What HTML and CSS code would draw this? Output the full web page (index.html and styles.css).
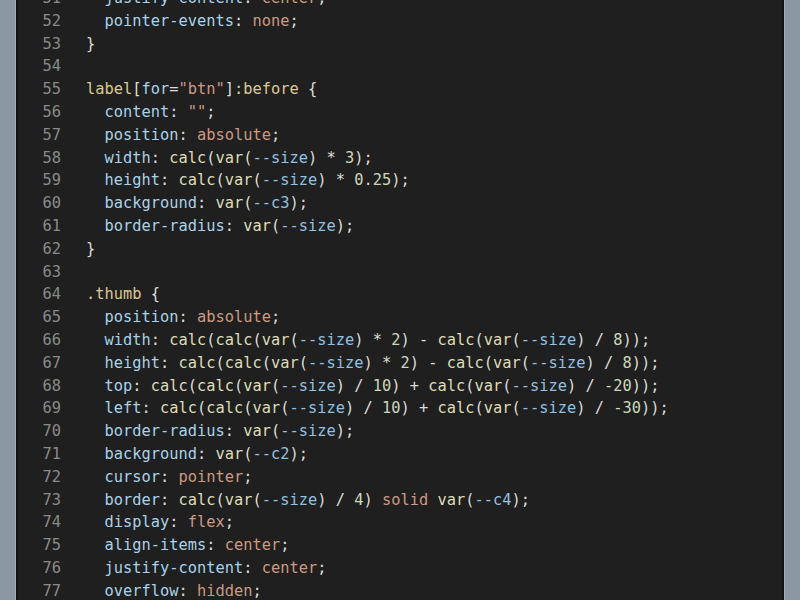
FILE: index.html
```html
<!DOCTYPE html>
<html>
<head>
<meta charset="utf-8">
<link rel="stylesheet" href="styles.css">
</head>
<body>
<div class="frame">
  <div class="side side-left"></div>
  <div class="editor">
    <div class="code">
      <div class="line"><span class="ln">51</span><span class="tx">  <span class="p">justify-content</span>: <span class="v">center</span>;</span></div>
      <div class="line"><span class="ln">52</span><span class="tx">  <span class="p">pointer-events</span>: <span class="v">none</span>;</span></div>
      <div class="line"><span class="ln">53</span><span class="tx">}</span></div>
      <div class="line"><span class="ln">54</span><span class="tx"></span></div>
      <div class="line"><span class="ln">55</span><span class="tx"><span class="s">label</span>[<span class="a">for</span>=<span class="v">"btn"</span>]<span class="s">:before</span> {</span></div>
      <div class="line"><span class="ln">56</span><span class="tx">  <span class="p">content</span>: <span class="v">""</span>;</span></div>
      <div class="line"><span class="ln">57</span><span class="tx">  <span class="p">position</span>: <span class="v">absolute</span>;</span></div>
      <div class="line"><span class="ln">58</span><span class="tx">  <span class="p">width</span>: <span class="f">calc</span>(<span class="f">var</span>(<span class="vr">--size</span>) * <span class="n">3</span>);</span></div>
      <div class="line"><span class="ln">59</span><span class="tx">  <span class="p">height</span>: <span class="f">calc</span>(<span class="f">var</span>(<span class="vr">--size</span>) * <span class="n">0.25</span>);</span></div>
      <div class="line"><span class="ln">60</span><span class="tx">  <span class="p">background</span>: <span class="f">var</span>(<span class="vr">--c3</span>);</span></div>
      <div class="line"><span class="ln">61</span><span class="tx">  <span class="p">border-radius</span>: <span class="f">var</span>(<span class="vr">--size</span>);</span></div>
      <div class="line"><span class="ln">62</span><span class="tx">}</span></div>
      <div class="line"><span class="ln">63</span><span class="tx"></span></div>
      <div class="line"><span class="ln">64</span><span class="tx"><span class="s">.thumb</span> {</span></div>
      <div class="line"><span class="ln">65</span><span class="tx">  <span class="p">position</span>: <span class="v">absolute</span>;</span></div>
      <div class="line"><span class="ln">66</span><span class="tx">  <span class="p">width</span>: <span class="f">calc</span>(<span class="f">calc</span>(<span class="f">var</span>(<span class="vr">--size</span>) * <span class="n">2</span>) - <span class="f">calc</span>(<span class="f">var</span>(<span class="vr">--size</span>) / <span class="n">8</span>));</span></div>
      <div class="line"><span class="ln">67</span><span class="tx">  <span class="p">height</span>: <span class="f">calc</span>(<span class="f">calc</span>(<span class="f">var</span>(<span class="vr">--size</span>) * <span class="n">2</span>) - <span class="f">calc</span>(<span class="f">var</span>(<span class="vr">--size</span>) / <span class="n">8</span>));</span></div>
      <div class="line"><span class="ln">68</span><span class="tx">  <span class="p">top</span>: <span class="f">calc</span>(<span class="f">calc</span>(<span class="f">var</span>(<span class="vr">--size</span>) / <span class="n">10</span>) + <span class="f">calc</span>(<span class="f">var</span>(<span class="vr">--size</span>) / <span class="n">-20</span>));</span></div>
      <div class="line"><span class="ln">69</span><span class="tx">  <span class="p">left</span>: <span class="f">calc</span>(<span class="f">calc</span>(<span class="f">var</span>(<span class="vr">--size</span>) / <span class="n">10</span>) + <span class="f">calc</span>(<span class="f">var</span>(<span class="vr">--size</span>) / <span class="n">-30</span>));</span></div>
      <div class="line"><span class="ln">70</span><span class="tx">  <span class="p">border-radius</span>: <span class="f">var</span>(<span class="vr">--size</span>);</span></div>
      <div class="line"><span class="ln">71</span><span class="tx">  <span class="p">background</span>: <span class="f">var</span>(<span class="vr">--c2</span>);</span></div>
      <div class="line"><span class="ln">72</span><span class="tx">  <span class="p">cursor</span>: <span class="v">pointer</span>;</span></div>
      <div class="line"><span class="ln">73</span><span class="tx">  <span class="p">border</span>: <span class="f">calc</span>(<span class="f">var</span>(<span class="vr">--size</span>) / <span class="n">4</span>) <span class="v">solid</span> <span class="f">var</span>(<span class="vr">--c4</span>);</span></div>
      <div class="line"><span class="ln">74</span><span class="tx">  <span class="p">display</span>: <span class="v">flex</span>;</span></div>
      <div class="line"><span class="ln">75</span><span class="tx">  <span class="p">align-items</span>: <span class="v">center</span>;</span></div>
      <div class="line"><span class="ln">76</span><span class="tx">  <span class="p">justify-content</span>: <span class="v">center</span>;</span></div>
      <div class="line"><span class="ln">77</span><span class="tx">  <span class="p">overflow</span>: <span class="v">hidden</span>;</span></div>
      <div class="line"><span class="ln">78</span><span class="tx">}</span></div>
    </div>
  </div>
  <div class="side side-right"></div>
</div>
</body>
</html>
```

FILE: styles.css
```css
html, body {
  margin: 0;
  padding: 0;
  width: 800px;
  height: 600px;
  overflow: hidden;
  background: #1e1e1e;
}

.frame {
  display: flex;
  width: 800px;
  height: 600px;
}

.side {
  background: #8b97a2;
}

.side-left {
  width: 15px;
  flex: none;
  border-right: 1px solid #a3acb4;
}

.side-right {
  width: 15px;
  flex: none;
  border-left: 1px solid #a3acb4;
}

.editor {
  flex: 1;
  background: #1f1f1f;
  border-left: 2px solid #141414;
  border-right: 2px solid #141414;
  overflow: hidden;
}

.code {
  margin-top: -13px;
  font-family: "DejaVu Sans Mono", "Liberation Mono", monospace;
  font-size: 15.37px;
  color: #dcdcd8;
}

.line {
  display: flex;
  height: 22.8px;
  line-height: 22.8px;
  white-space: pre;
}

.ln {
  width: 43px;
  flex: none;
  text-align: right;
  color: #8a8a8a;
  padding-right: 25px;
}

.tx {
  flex: 1;
}

.p { color: #a9d2ea; }
.a { color: #a9d2ea; }
.v { color: #cc9a82; }
.f { color: #dedcb6; }
.vr { color: #92c0e0; }
.n { color: #ccd8bc; }
.s { color: #dcc991; }
```
